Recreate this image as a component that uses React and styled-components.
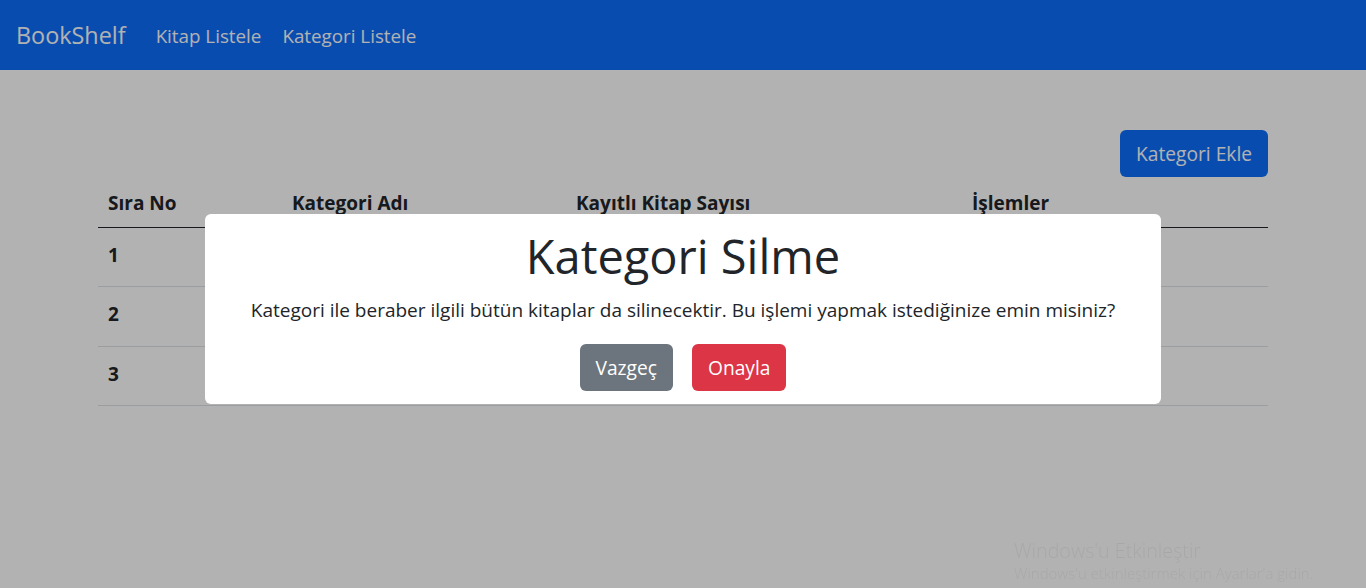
import React from "react";
import styled, { createGlobalStyle } from "styled-components";

const GlobalStyle = createGlobalStyle`
  html, body { margin: 0; padding: 0; }
  body {
    font-family: "Open Sans", "Noto Sans", sans-serif;
    background: #ffffff;
    color: #212529;
    height: 588px;
    overflow: hidden;
  }
`;

const Navbar = styled.nav`
  height: 70px;
  background: #0d6efd;
  display: flex;
  align-items: center;
  padding: 0 16px;
  gap: 30px;
`;

const Brand = styled.a`
  font-size: 23.4px;
  color: #ffffff;
  text-decoration: none;
  margin-top: -1px;
`;

const NavLinks = styled.div`
  display: flex;
  gap: 21px;
`;

const NavLink = styled.a`
  font-size: 18.8px;
  color: #ffffff;
  text-decoration: none;
  margin-top: 1px;
`;

const Container = styled.main`
  width: 1170px;
  margin: 0 auto;
  padding-top: 60px;
`;

const Toolbar = styled.div`
  display: flex;
  justify-content: flex-end;
`;

const Button = styled.button`
  font-family: inherit;
  font-size: 19.2px;
  height: 47px;
  padding: 0 ${(p) => p.$px || 16}px;
  border: none;
  border-radius: 6px;
  color: #ffffff;
  background: ${(p) => p.$bg};
  cursor: pointer;
`;

const Table = styled.table`
  width: 100%;
  table-layout: fixed;
  border-collapse: collapse;
  margin-top: 1px;
`;

const Th = styled.th`
  text-align: left;
  font-weight: 700;
  font-size: 19px;
  height: 49px;
  padding: 1px 10px 0;
  border-bottom: 1px solid #212529;
  width: ${(p) => p.$w}px;
  box-sizing: border-box;
`;

const Td = styled.td`
  font-weight: 700;
  font-size: 19px;
  height: 59.5px;
  padding: 0 10px 4px;
  box-sizing: border-box;
  border-bottom: 1px solid #dee2e6;
`;

const Backdrop = styled.div`
  position: fixed;
  inset: 0;
  background: rgba(0, 0, 0, 0.3);
  display: flex;
  justify-content: center;
  align-items: flex-start;
  padding-top: 214px;
`;

const Modal = styled.div`
  width: 956px;
  height: 190px;
  box-sizing: border-box;
  background: #ffffff;
  border-radius: 6px;
  display: flex;
  flex-direction: column;
  align-items: center;
  color: #212529;
`;

const Title = styled.h1`
  margin: 12px 0 0;
  font-size: 47px;
  font-weight: 400;
  line-height: 60px;
`;

const Message = styled.p`
  margin: 11px 0 0;
  font-size: 19px;
  line-height: 26px;
`;

const Actions = styled.div`
  display: flex;
  gap: 19px;
  margin-top: 21px;
`;

const Watermark = styled.div`
  position: fixed;
  left: 1014px;
  top: 537px;
  color: rgba(0, 0, 0, 0.06);
  font-family: "Open Sans", sans-serif;
  font-weight: 300;
`;

const WatermarkTitle = styled.div`
  font-size: 19.7px;
  line-height: 27px;
`;

const WatermarkSub = styled.div`
  font-size: 15px;
  line-height: 19px;
`;

const rows = [1, 2, 3];

export default function App() {
  return (
    <>
      <GlobalStyle />
      <Navbar>
        <Brand href="#">BookShelf</Brand>
        <NavLinks>
          <NavLink href="#">Kitap Listele</NavLink>
          <NavLink href="#">Kategori Listele</NavLink>
        </NavLinks>
      </Navbar>
      <Container>
        <Toolbar>
          <Button $bg="#0d6efd">Kategori Ekle</Button>
        </Toolbar>
        <Table>
          <thead>
            <tr>
              <Th $w={184}>Sıra No</Th>
              <Th $w={284}>Kategori Adı</Th>
              <Th $w={396}>Kayıtlı Kitap Sayısı</Th>
              <Th $w={306}>İşlemler</Th>
            </tr>
          </thead>
          <tbody>
            {rows.map((n) => (
              <tr key={n}>
                <Td>{n}</Td>
                <Td></Td>
                <Td></Td>
                <Td></Td>
              </tr>
            ))}
          </tbody>
        </Table>
      </Container>
      <Backdrop>
        <Modal>
          <Title>Kategori Silme</Title>
          <Message>
            Kategori ile beraber ilgili bütün kitaplar da silinecektir. Bu işlemi yapmak istediğinize emin misiniz?
          </Message>
          <Actions>
            <Button $bg="#6c757d" $px={16}>Vazgeç</Button>
            <Button $bg="#dc3545" $px={16}>Onayla</Button>
          </Actions>
        </Modal>
      </Backdrop>
      <Watermark>
        <WatermarkTitle>Windows'u Etkinleştir</WatermarkTitle>
        <WatermarkSub>Windows'u etkinleştirmek için Ayarlar'a gidin.</WatermarkSub>
      </Watermark>
    </>
  );
}
